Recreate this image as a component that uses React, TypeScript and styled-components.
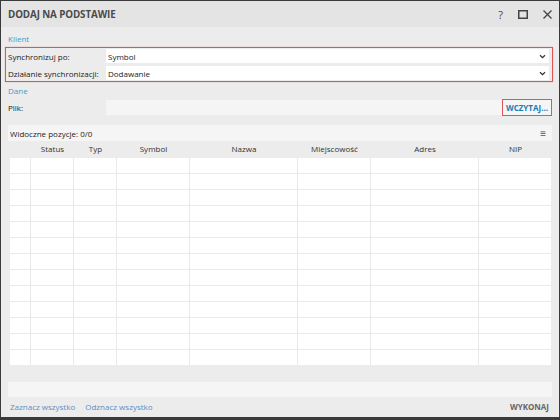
import React from 'react';
import styled, { createGlobalStyle } from 'styled-components';

const COLORS = {
  BORDER: '#3a3a3a',
  TITLE_BG: '#e4e4e4',
  BODY_BG: '#ececec',
  LIGHT_BAR: '#f5f5f5',
  SECTION: '#3a9fcb',
  LINK: '#5a8fc6',
  ACTION: '#1a7db8',
  TEXT: '#222',
  MUTED: '#666',
  RED: '#e05555',
  GRID_LINE: '#e9e9e9',
};

// width = column pitch minus the 1px grid line
const COLUMNS = [
  { title: '', width: 20 },
  { title: 'Status', width: 42 },
  { title: 'Typ', width: 42 },
  { title: 'Symbol', width: 72 },
  { title: 'Nazwa', width: 107 },
  { title: 'Miejscowość', width: 72 },
  { title: 'Adres', width: 107 },
  { title: 'NIP', width: 72 },
];

const ROW_COUNT = 13;
const FONT_SIZE = '8px';

const GlobalStyle = createGlobalStyle`
  html, body {
    margin: 0;
    padding: 0;
    background: #fff;
  }

  body {
    font-family: 'Open Sans', 'Noto Sans', sans-serif;
    color: ${COLORS.TEXT};
  }
`;

const Chevron = () => (
  <svg width="7" height="5" viewBox="0 0 7 5">
    <path d="M1 1.2 L3.5 3.6 L6 1.2" fill="none" stroke="#333" strokeWidth="1.3" />
  </svg>
);

const App = () => {
  const gridTemplate = COLUMNS.map((c) => `${c.width}px`).join(' ');

  return (
    <>
      <GlobalStyle />
      <Window>
        <TitleBar>
          <Title>DODAJ NA PODSTAWIE</Title>
          <TitleActions>
            <HelpIcon>?</HelpIcon>
            <svg width="10" height="9" viewBox="0 0 10 9">
              <rect x="0.75" y="0.75" width="8.5" height="7.5" fill="none" stroke="#444" strokeWidth="1.5" />
            </svg>
            <svg width="9" height="9" viewBox="0 0 9 9">
              <path d="M0.5 0.5 L8.5 8.5 M8.5 0.5 L0.5 8.5" stroke="#444" strokeWidth="1.3" />
            </svg>
          </TitleActions>
        </TitleBar>

        <Body>
          <SectionLabel>Klient</SectionLabel>
          <HighlightBox>
            <FieldRow>
              <FieldLabel>Synchronizuj po:</FieldLabel>
              <SelectBox>
                <span>Symbol</span>
                <Chevron />
              </SelectBox>
            </FieldRow>
            <FieldRow>
              <FieldLabel>Działanie synchronizacji:</FieldLabel>
              <SelectBox>
                <span>Dodawanie</span>
                <Chevron />
              </SelectBox>
            </FieldRow>
          </HighlightBox>

          <SectionLabel>Dane</SectionLabel>
          <FileRow>
            <FieldLabel>Plik:</FieldLabel>
            <FileInput>
              <LoadButton>WCZYTAJ...</LoadButton>
            </FileInput>
          </FileRow>

          <InfoBar>
            <span>Widoczne pozycje: 0/0</span>
            <MenuGlyph>≡</MenuGlyph>
          </InfoBar>

          <Grid $template={gridTemplate}>
            {COLUMNS.map((c, i) => (
              <HeaderCell key={`h${i}`}>{c.title}</HeaderCell>
            ))}
            {Array.from({ length: ROW_COUNT }).flatMap((_, r) =>
              COLUMNS.map((c, i) => <Cell key={`${r}-${i}`} />)
            )}
          </Grid>

          <BottomBar />
        </Body>

        <Footer>
          <FooterLinks>
            <FooterLink>Zaznacz wszystko</FooterLink>
            <FooterLink>Odznacz wszystko</FooterLink>
          </FooterLinks>
          <ExecuteButton>WYKONAJ</ExecuteButton>
        </Footer>
      </Window>
    </>
  );
};

const Window = styled.div`
  box-sizing: border-box;
  width: 560px;
  height: 420px;
  border: 1px solid ${COLORS.BORDER};
  border-bottom-width: 3px;
  background: ${COLORS.BODY_BG};
  display: flex;
  flex-direction: column;
  overflow: hidden;
`;

const TitleBar = styled.header`
  height: 26px;
  flex-shrink: 0;
  background: ${COLORS.TITLE_BG};
  display: flex;
  align-items: center;
  justify-content: space-between;
  padding: 0 7px 0 7px;
`;

const Title = styled.div`
  font-size: 9.8px;
  font-weight: 700;
  color: #4a4a4a;
  letter-spacing: -0.1px;
`;

const TitleActions = styled.div`
  display: flex;
  align-items: center;
  gap: 15px;
`;

const HelpIcon = styled.span`
  font-size: 11px;
  color: #444;
  line-height: 1;
`;

const Body = styled.main`
  flex-shrink: 0;
  display: flex;
  flex-direction: column;
  padding: 4px 6px 0 4px;
`;

const SectionLabel = styled.div`
  font-size: ${FONT_SIZE};
  color: ${COLORS.SECTION};
  height: 15px;
  line-height: 15px;
  padding-left: 3px;
`;

const HighlightBox = styled.div`
  border: 1px solid ${COLORS.RED};
  box-shadow: 0 0 1px rgba(224, 85, 85, 0.6);
  padding: 1px 3px 1px 2px;
  display: flex;
  flex-direction: column;
  gap: 3px;
  margin: 1px 0 1px;
`;

const FieldRow = styled.div`
  display: flex;
  align-items: center;
  height: 14px;
`;

const FieldLabel = styled.div`
  width: 98px;
  flex-shrink: 0;
  font-size: ${FONT_SIZE};
  color: ${COLORS.TEXT};
`;

const SelectBox = styled.div`
  flex: 1;
  height: 14px;
  background: #fff;
  display: flex;
  align-items: center;
  justify-content: space-between;
  padding: 0 3px 0 2px;
  font-size: ${FONT_SIZE};
`;

const FileRow = styled.div`
  display: flex;
  align-items: center;
  height: 17px;
  padding: 0 2px 0 3px;
  margin-top: 1px;
`;

const FileInput = styled.div`
  flex: 1;
  height: 15px;
  background: #f5f5f5;
  display: flex;
  justify-content: flex-end;
  align-items: center;
`;

const LoadButton = styled.div`
  box-sizing: border-box;
  height: 17px;
  border: 1px solid ${COLORS.RED};
  padding: 0 3px;
  font-size: ${FONT_SIZE};
  font-weight: 700;
  color: ${COLORS.ACTION};
  display: flex;
  align-items: center;
  margin-right: -1px;
`;

const InfoBar = styled.div`
  margin: 9px 1px 0 3px;
  height: 16px;
  background: ${COLORS.LIGHT_BAR};
  display: flex;
  align-items: center;
  justify-content: space-between;
  padding: 0 6px 0 2px;
  font-size: ${FONT_SIZE};
`;

const MenuGlyph = styled.span`
  font-size: 10px;
  color: #555;
`;

const Grid = styled.div<{ $template: string }>`
  display: grid;
  grid-template-columns: ${({ $template }) => $template};
  grid-template-rows: 16px;
  grid-auto-rows: 15px;
  column-gap: 1px;
  row-gap: 1px;
  margin: 0 0 17px 5px;
  width: max-content;
  background: linear-gradient(${COLORS.BODY_BG}, ${COLORS.BODY_BG}) top / 100% 17px no-repeat, ${COLORS.GRID_LINE};
`;

const HeaderCell = styled.div`
  background: ${COLORS.BODY_BG};
  font-size: ${FONT_SIZE};
  text-align: center;
  line-height: 16px;
  color: #333;
  margin-right: -1px;
`;

const Cell = styled.div`
  background: #fff;
`;

const BottomBar = styled.div`
  height: 15px;
  background: ${COLORS.LIGHT_BAR};
  margin: 0 1px 0 3px;
`;

const Footer = styled.footer`
  flex: 1;
  display: flex;
  align-items: center;
  justify-content: space-between;
  padding: 0 10px 2px 9px;
`;

const FooterLinks = styled.div`
  display: flex;
  gap: 10px;
`;

const FooterLink = styled.span`
  font-size: ${FONT_SIZE};
  color: ${COLORS.LINK};
`;

const ExecuteButton = styled.span`
  font-size: ${FONT_SIZE};
  font-weight: 700;
  color: ${COLORS.MUTED};
`;

export default App;
